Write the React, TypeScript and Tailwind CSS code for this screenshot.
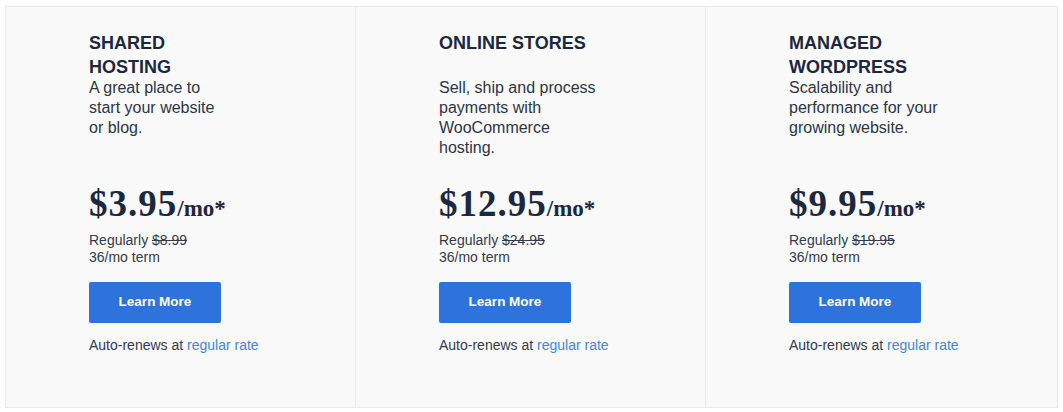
const plans = [
  {
    title: ["SHARED", "HOSTING"],
    desc: ["A great place to", "start your website", "or blog."],
    price: "$3.95",
    regular: "$8.99",
  },
  {
    title: ["ONLINE STORES"],
    desc: ["Sell, ship and process", "payments with", "WooCommerce", "hosting."],
    price: "$12.95",
    regular: "$24.95",
  },
  {
    title: ["MANAGED", "WORDPRESS"],
    desc: ["Scalability and", "performance for your", "growing website."],
    price: "$9.95",
    regular: "$19.95",
  },
]

function PlanCard({ plan, last }: { plan: (typeof plans)[number]; last: boolean }) {
  return (
    <div className={`pl-[83px] pt-[24px] pb-[40px] ${last ? "" : "border-r border-[#e9e9ec]"}`}>
      {/* title always takes two lines of room */}
      <div className="h-[47px] text-[18px] leading-[24px] font-bold text-[#1c2740]">
        {plan.title.map((t) => (
          <div key={t}>{t}</div>
        ))}
      </div>
      <div className="h-[80px] text-[16px] leading-[20px] text-[#2c3547]">
        {plan.desc.map((d) => (
          <div key={d}>{d}</div>
        ))}
      </div>

      <div
        className="mt-[26px] h-[40px] leading-[40px] font-bold text-[#1c2740] whitespace-nowrap"
        style={{ fontFamily: '"Liberation Serif", serif' }}
      >
        <span className="text-[37px] tracking-[1px]">{plan.price}</span>
        <span className="text-[23px]">/mo*</span>
      </div>

      <div className="mt-[8px] text-[14px] leading-[17px] text-[#333b4c]">
        <div>
          Regularly <span className="line-through">{plan.regular}</span>
        </div>
        <div>36/mo term</div>
      </div>

      <button className="mt-[16px] w-[132px] h-[41px] rounded-[2px] bg-[#2e73dc] text-white text-[13.5px] font-bold">
        Learn More
      </button>

      <div className="mt-[14px] text-[14px] leading-[17px] text-[#333b4c]">
        Auto-renews at <span className="text-[#3f86e3]">regular rate</span>
      </div>
    </div>
  )
}

export default function App() {
  return (
    <div
      className="w-[1063px] h-[412px] bg-white pl-[5px] pt-[6px]"
      style={{ fontFamily: '"Liberation Sans", Arial, sans-serif' }}
    >
      <div className="w-[1053px] h-[402px] grid grid-cols-[350px_350px_1fr] bg-[#f9f9fa] border border-[#e9e9ec]">
        {plans.map((p, i) => (
          <PlanCard key={p.price} plan={p} last={i === plans.length - 1} />
        ))}
      </div>
    </div>
  )
}
